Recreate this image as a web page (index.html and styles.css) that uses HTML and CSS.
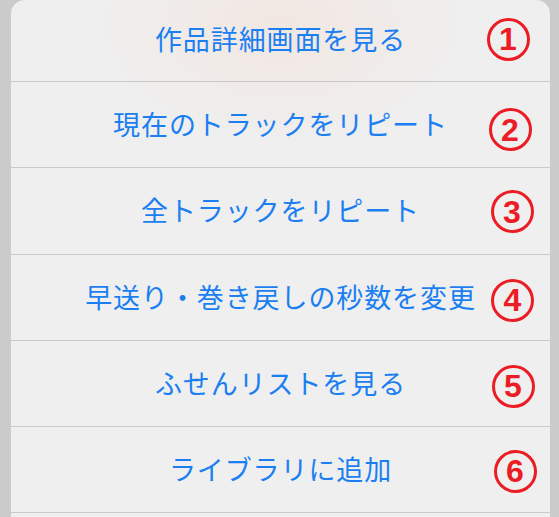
FILE: index.html
```html
<!DOCTYPE html>
<html lang="ja">
<head>
<meta charset="utf-8">
<title>アクションシート</title>
<link rel="stylesheet" href="styles.css">
</head>
<body>
<div class="sheet">
  <div class="row row-first">作品詳細画面を見る</div>
  <div class="row">現在のトラックをリピート</div>
  <div class="row">全トラックをリピート</div>
  <div class="row">早送り・巻き戻しの秒数を変更</div>
  <div class="row">ふせんリストを見る</div>
  <div class="row">ライブラリに追加</div>
  <div class="row"></div>
  <div class="badge b1">1</div>
  <div class="badge b2">2</div>
  <div class="badge b3">3</div>
  <div class="badge b4">4</div>
  <div class="badge b5">5</div>
  <div class="badge b6">6</div>
</div>
</body>
</html>
```
FILE: styles.css
```css
html, body {
  margin: 0;
  padding: 0;
}
body {
  background: #cbcbcb;
  width: 559px;
  height: 517px;
  overflow: hidden;
}
.sheet {
  position: relative;
  margin-left: 11px;
  width: 539px;
  height: 540px;
  border-radius: 14px 14px 0 0;
  overflow: hidden;
  background:
    radial-gradient(ellipse 190px 120px at 270px 25px, rgba(242, 230, 224, 0.9), rgba(242, 230, 224, 0) 100%),
    #efefef;
  display: flex;
  flex-direction: column;
}
.row {
  flex: none;
  border-bottom: 1px solid #c9c9c9;
  display: flex;
  align-items: center;
  justify-content: center;
  font-family: "Noto Sans CJK JP", sans-serif;
  font-size: 27px;
  letter-spacing: 0.9px;
  color: #1b7ff2;
  padding-bottom: 2px;
  box-sizing: border-box;
  height: 86.3px;
}
.row-first {
  height: 82px;
  padding-bottom: 4px;
}
.badge {
  position: absolute;
  width: 43px;
  height: 43px;
  box-sizing: border-box;
  border: 3px solid #ec1c24;
  border-radius: 50%;
  display: flex;
  align-items: center;
  justify-content: center;
  font-family: "Liberation Sans", Arial, sans-serif;
  font-weight: 700;
  font-size: 32px;
  line-height: 1;
  color: #ec1c24;
}
.b1 { left: 475.5px; top: 17.5px; }
.b2 { left: 477.5px; top: 108px; }
.b3 { left: 479.5px; top: 190px; }
.b4 { left: 480px; top: 278.5px; }
.b5 { left: 480.5px; top: 364.5px; }
.b6 { left: 482.5px; top: 449.5px; }
```
